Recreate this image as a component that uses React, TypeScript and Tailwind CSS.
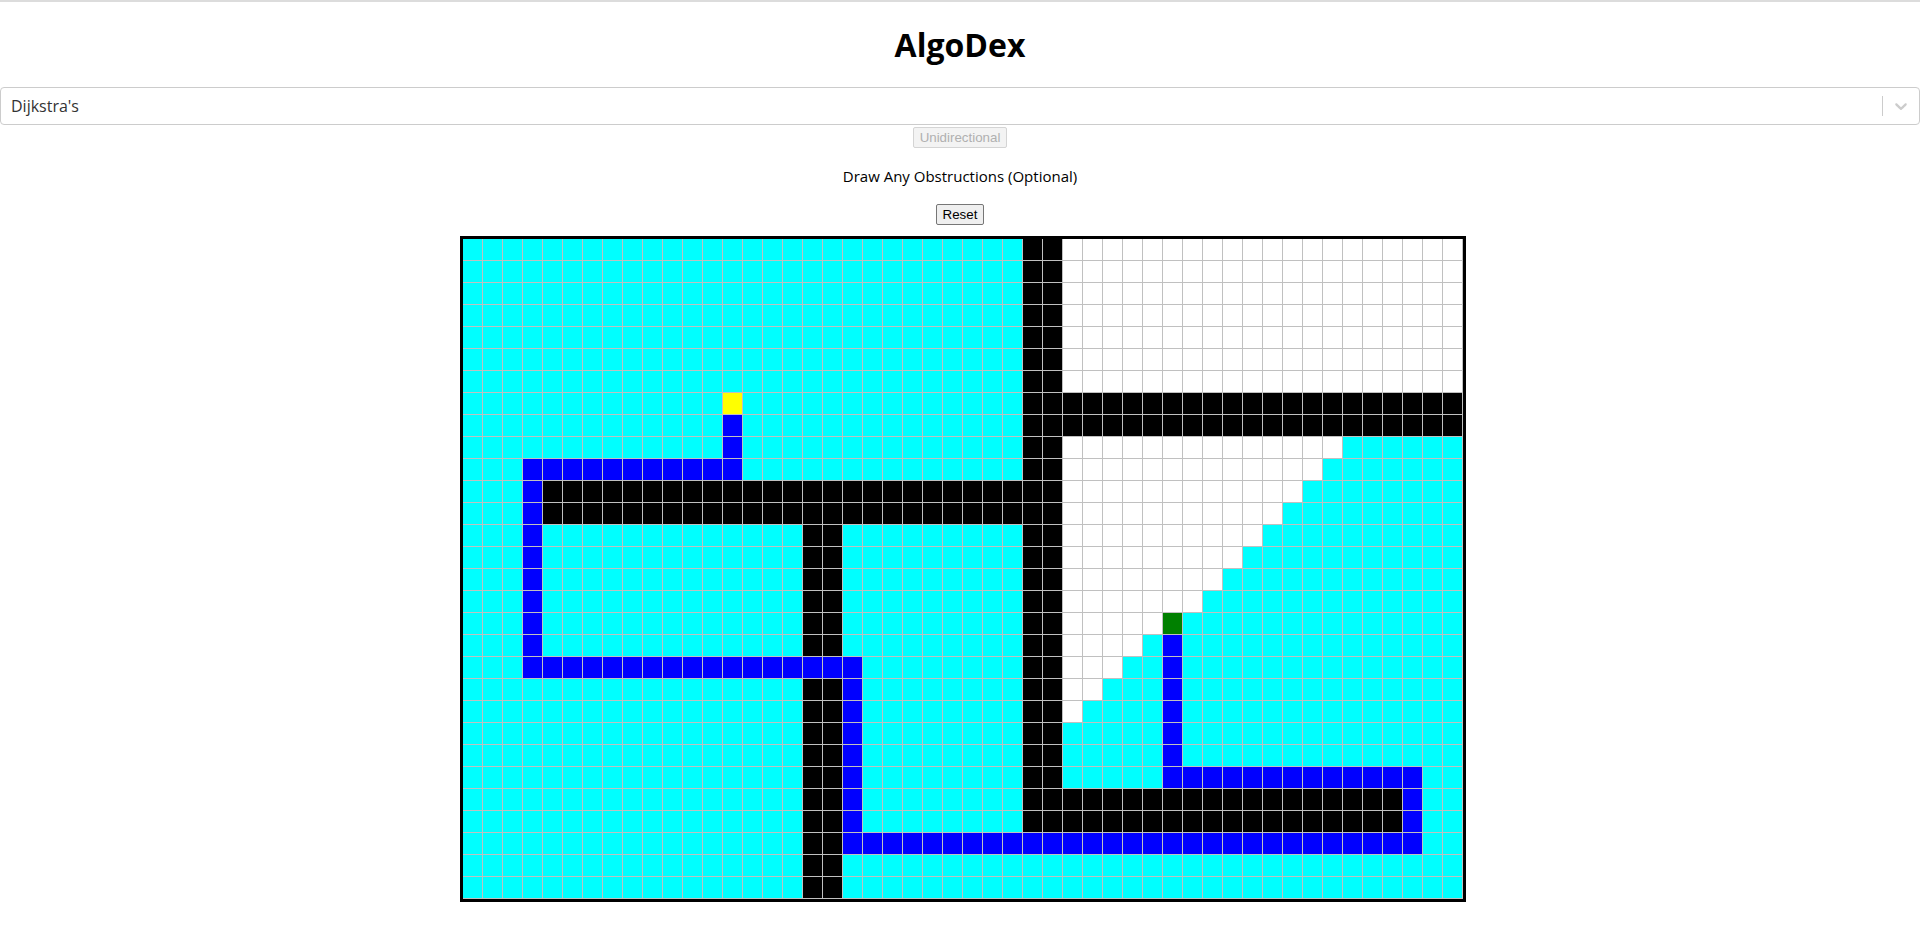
import React from "react";

const ROWS = 30;
const COLS = 50;

type Cell = "visited" | "unvisited" | "wall" | "path" | "start" | "end";

const cellColors: Record<Cell, string> = {
  visited: "bg-[#00ffff]",
  unvisited: "bg-white",
  wall: "bg-black",
  path: "bg-[#0000ff]",
  start: "bg-[#ffff00]",
  end: "bg-[#008000]",
};

// last unvisited column for rows 9..21 (the wedge right of the wall)
const wedgeEnds = [43, 42, 41, 40, 39, 38, 37, 36, 34, 33, 32, 31, 30];

function buildGrid(): Cell[][] {
  const g: Cell[][] = Array.from({ length: ROWS }, () =>
    Array.from({ length: COLS }, () => "visited" as Cell)
  );
  const fill = (r1: number, r2: number, c1: number, c2: number, t: Cell) => {
    for (let r = r1; r <= r2; r++) for (let c = c1; c <= c2; c++) g[r][c] = t;
  };

  // unvisited
  fill(0, 6, 30, 49, "unvisited");
  wedgeEnds.forEach((end, i) => fill(9 + i, 9 + i, 30, end, "unvisited"));

  // walls
  fill(0, 26, 28, 29, "wall");
  fill(7, 8, 28, 49, "wall");
  fill(11, 12, 4, 29, "wall");
  fill(13, 29, 17, 18, "wall");
  fill(25, 26, 28, 46, "wall");

  // shortest path
  fill(8, 10, 13, 13, "path");
  fill(10, 10, 3, 13, "path");
  fill(10, 19, 3, 3, "path");
  fill(19, 19, 3, 19, "path");
  fill(19, 27, 19, 19, "path");
  fill(27, 27, 19, 47, "path");
  fill(24, 27, 47, 47, "path");
  fill(24, 24, 35, 47, "path");
  fill(18, 24, 35, 35, "path");

  g[7][13] = "start";
  g[17][35] = "end";
  return g;
}

const grid = buildGrid();

function AlgoSelect() {
  return (
    <div className="flex h-[38px] w-full items-center rounded border border-[#cccccc] bg-white">
      <div className="flex-1 pl-[10px] text-[16px] text-[#333333]">Dijkstra's</div>
      <div className="flex items-center">
        <span className="my-2 h-[20px] w-px bg-[#cccccc]" />
        <div className="p-2 text-[#cccccc]">
          <svg width="20" height="20" viewBox="0 0 20 20" fill="currentColor">
            <path d="M4.516 7.548c0.436-0.446 1.043-0.481 1.576 0l3.908 3.747 3.908-3.747c0.533-0.481 1.141-0.446 1.574 0 0.436 0.445 0.408 1.197 0 1.615-0.406 0.418-4.695 4.502-4.695 4.502-0.217 0.223-0.502 0.335-0.787 0.335s-0.57-0.112-0.789-0.335c0 0-4.287-4.084-4.695-4.502s-0.436-1.17 0-1.615z" />
          </svg>
        </div>
      </div>
    </div>
  );
}

function Board() {
  return (
    <div className="border-[3px] border-black">
      <div className="grid grid-cols-[repeat(50,19px)] gap-px bg-[#c0c0c0] pr-px pb-px">
        {grid.map((row, r) =>
          row.map((cell, c) => (
            <div key={`${r}-${c}`} className={`h-[21px] w-[19px] ${cellColors[cell]}`} />
          ))
        )}
      </div>
    </div>
  );
}

export default function App() {
  return (
    <div className="min-h-[938px] bg-white font-['Open_Sans','Noto_Sans',sans-serif] text-black">
      <div className="h-[2px] w-full bg-[#dcdcdc]" />
      <div className="flex flex-col items-center">
        <h1 className="mt-[23px] mb-[22px] text-[32px] leading-[40px] font-bold">AlgoDex</h1>
        <AlgoSelect />
        <button
          disabled
          className="mt-[2px] h-[21px] rounded-[2px] border border-[#d4d4d4] bg-[#f3f3f3] px-[6px] font-['Liberation_Sans',sans-serif] text-[13.33px] leading-[17px] text-[#b0b0b0]"
        >
          Unidirectional
        </button>
        <p className="my-4 text-[15px] leading-[24px]">Draw Any Obstructions (Optional)</p>
        <button className="h-[21px] rounded-[2px] border border-[#767676] bg-[#efefef] px-[6px] font-['Liberation_Sans',sans-serif] text-[13.33px] leading-[17px] text-black">
          Reset
        </button>
        <div className="mt-[11px] ml-[6px]">
          <Board />
        </div>
      </div>
    </div>
  );
}
